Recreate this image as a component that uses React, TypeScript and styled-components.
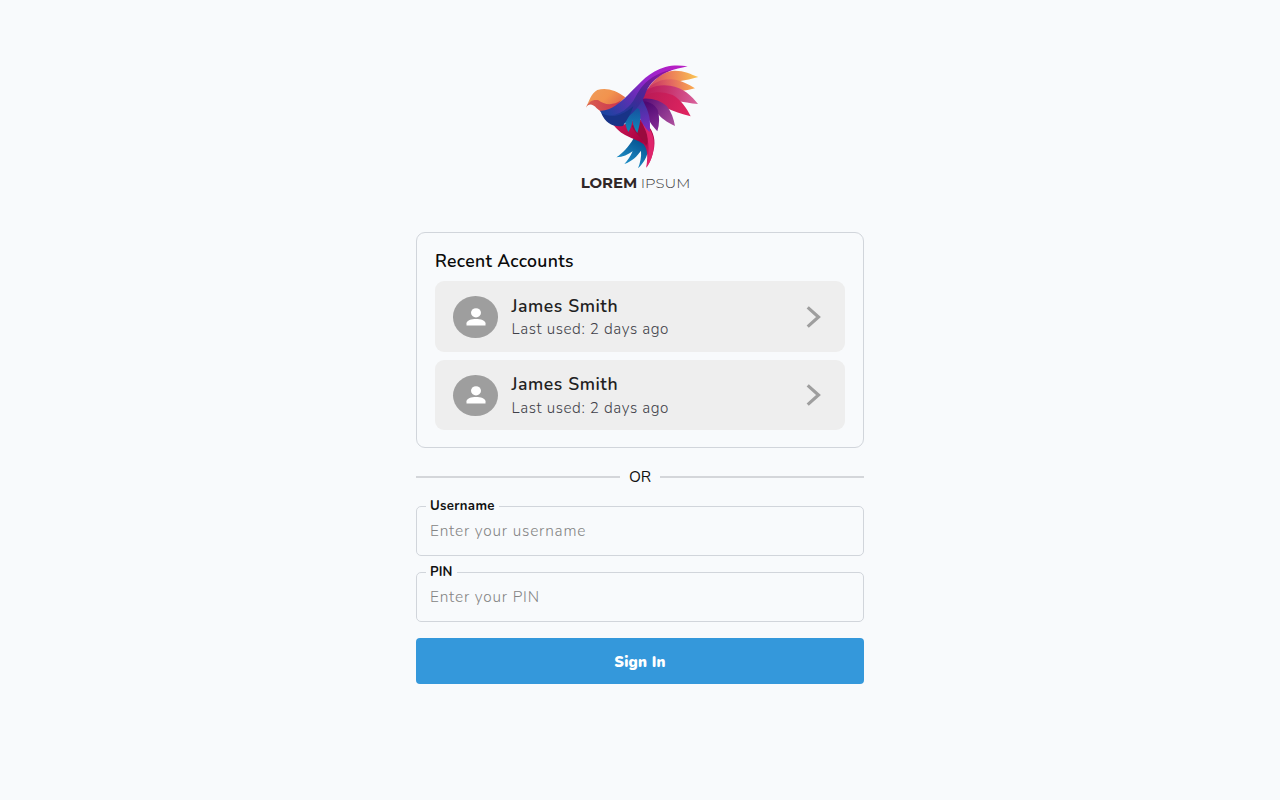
import React from "react";
import styled, { createGlobalStyle } from "styled-components";

const GlobalStyle = createGlobalStyle`
  * { box-sizing: border-box; }
  body {
    margin: 0;
    background: #f8fafc;
    font-family: Nunito, Lato, "Open Sans", sans-serif;
    color: #111;
  }
`;

const Page = styled.main`
  min-height: 800px;
  display: flex;
  flex-direction: column;
  align-items: center;
  padding-top: 55px;
`;

const Logo = styled.svg`
  display: block;
  width: 140px;
  height: 145px;
`;

const Content = styled.div`
  width: 448px;
  margin-top: 32px;
  display: flex;
  flex-direction: column;
`;

const Card = styled.section`
  height: 216px;
  border: 1px solid #d1d5db;
  border-radius: 9px;
  padding: 16px 18px 0;
`;

const CardTitle = styled.h2`
  margin: 0 0 8.2px;
  font-size: 17.6px;
  line-height: 24px;
  font-weight: 650;
  letter-spacing: 0.33px;
  color: #0a0a0a;
`;

const AccountList = styled.div`
  display: flex;
  flex-direction: column;
  gap: 7.7px;
`;

const Account = styled.button`
  display: flex;
  align-items: center;
  width: 100%;
  height: 70.7px;
  padding: 1px 18px 0;
  border: 0;
  border-radius: 9px;
  background: #eee;
  font-family: inherit;
  text-align: left;
`;

const Avatar = styled.span`
  display: flex;
  align-items: center;
  justify-content: center;
  width: 45px;
  height: 41.5px;
  border-radius: 50%;
  background: #9e9e9e;
`;

const Details = styled.span`
  display: flex;
  flex-direction: column;
  flex: 1;
  margin-left: 13.5px;
`;

const Name = styled.span`
  font-size: 17.6px;
  line-height: 24.7px;
  font-weight: 650;
  letter-spacing: 0.57px;
  color: #212121;
`;

const LastUsed = styled.span`
  font-size: 15.2px;
  line-height: 22px;
  font-weight: 300;
  letter-spacing: 0.6px;
  color: #3f3f48;
`;

const Chevron = styled.svg`
  width: 16px;
  height: 24px;
  margin-right: 5px;
`;

const Divider = styled.div`
  display: flex;
  align-items: center;
  gap: 9px;
  height: 20px;
  margin-top: 19px;
  font-size: 15.5px;
  line-height: 20px;

  &::before,
  &::after {
    content: "";
    flex: 1;
    height: 2px;
    background: #d4d6da;
  }
`;

const Field = styled.fieldset<{ $top: number }>`
  height: 58px;
  margin: ${(p) => p.$top}px 0 0;
  padding: 0 13px;
  min-width: 0;
  border: 1px solid #d1d5db;
  border-radius: 5px;
`;

const Legend = styled.legend<{ $spacing: number }>`
  margin-left: -4px;
  padding: 1px 4px 0;
  font-size: 13.2px;
  line-height: 15px;
  font-weight: 660;
  letter-spacing: ${(p) => p.$spacing}px;
  color: #111;
`;

const Input = styled.input`
  display: block;
  width: 100%;
  height: 33px;
  padding: 0;
  border: 0;
  outline: 0;
  background: transparent;
  font-family: inherit;
  font-size: 15.4px;
  font-weight: 300;
  letter-spacing: 0.82px;

  &::placeholder {
    color: #848484;
    opacity: 1;
  }
`;

const SignIn = styled.button`
  height: 46px;
  margin-top: 16.4px;
  padding-top: 2px;
  border: 0;
  border-radius: 4px;
  background: #3498db;
  color: #fff;
  font-family: inherit;
  font-size: 14.8px;
  font-weight: 900;
  letter-spacing: 0.22px;
`;

function BirdLogo() {
  return (
    <Logo viewBox="0 0 420 435" aria-label="Lorem Ipsum">
      <defs>
        <linearGradient id="head" x1="0" y1="0" x2="1" y2="0.5">
          <stop offset="0" stopColor="#ee9d5c" />
          <stop offset="0.6" stopColor="#f2934e" />
          <stop offset="1" stopColor="#e5704a" />
        </linearGradient>
        <linearGradient id="cheek" x1="0" y1="0" x2="1" y2="0">
          <stop offset="0" stopColor="#d9604f" />
          <stop offset="1" stopColor="#cc3350" />
        </linearGradient>
        <linearGradient id="wing" gradientUnits="userSpaceOnUse" x1="110" y1="180" x2="310" y2="35">
          <stop offset="0" stopColor="#1d43a0" />
          <stop offset="0.35" stopColor="#5c2fb2" />
          <stop offset="0.65" stopColor="#9823cd" />
          <stop offset="1" stopColor="#b51fc4" />
        </linearGradient>
        <linearGradient id="fold" gradientUnits="userSpaceOnUse" x1="180" y1="190" x2="270" y2="55">
          <stop offset="0" stopColor="#203999" />
          <stop offset="0.55" stopColor="#512397" />
          <stop offset="1" stopColor="#8b159e" />
        </linearGradient>
        <linearGradient id="gold" gradientUnits="userSpaceOnUse" x1="240" y1="80" x2="383" y2="66">
          <stop offset="0" stopColor="#d54b68" />
          <stop offset="0.5" stopColor="#ee8658" />
          <stop offset="1" stopColor="#fac553" />
        </linearGradient>
        <linearGradient id="amber" gradientUnits="userSpaceOnUse" x1="230" y1="110" x2="370" y2="95">
          <stop offset="0" stopColor="#c32863" />
          <stop offset="0.55" stopColor="#e36961" />
          <stop offset="1" stopColor="#faa84f" />
        </linearGradient>
        <linearGradient id="rose" gradientUnits="userSpaceOnUse" x1="220" y1="120" x2="382" y2="145">
          <stop offset="0" stopColor="#bc1857" />
          <stop offset="0.4" stopColor="#c62f69" />
          <stop offset="1" stopColor="#d8629d" />
        </linearGradient>
        <linearGradient id="crimson" gradientUnits="userSpaceOnUse" x1="215" y1="130" x2="350" y2="180">
          <stop offset="0" stopColor="#b81a55" />
          <stop offset="1" stopColor="#df2460" />
        </linearGradient>
        <linearGradient id="plum" gradientUnits="userSpaceOnUse" x1="220" y1="140" x2="312" y2="210">
          <stop offset="0" stopColor="#5a0e78" />
          <stop offset="1" stopColor="#ac4e9d" />
        </linearGradient>
        <linearGradient id="violet" gradientUnits="userSpaceOnUse" x1="220" y1="150" x2="260" y2="225">
          <stop offset="0" stopColor="#500973" />
          <stop offset="1" stopColor="#842b95" />
        </linearGradient>
        <linearGradient id="body" gradientUnits="userSpaceOnUse" x1="135" y1="210" x2="245" y2="330">
          <stop offset="0" stopColor="#c71754" />
          <stop offset="0.55" stopColor="#a90041" />
          <stop offset="1" stopColor="#df2d78" />
        </linearGradient>
        <linearGradient id="tail" gradientUnits="userSpaceOnUse" x1="205" y1="255" x2="165" y2="325">
          <stop offset="0" stopColor="#075493" />
          <stop offset="1" stopColor="#1d8ec6" />
        </linearGradient>
        <linearGradient id="underwing" gradientUnits="userSpaceOnUse" x1="190" y1="155" x2="190" y2="232">
          <stop offset="0" stopColor="#174e9e" />
          <stop offset="1" stopColor="#108ab9" />
        </linearGradient>
        <linearGradient id="indigo" gradientUnits="userSpaceOnUse" x1="205" y1="140" x2="235" y2="230">
          <stop offset="0" stopColor="#37359f" />
          <stop offset="1" stopColor="#812ac2" />
        </linearGradient>
      </defs>
      <path fill="url(#gold)" d="M225 115C245 75 280 48 312 47C340 46 362 57 385 66C366 72 345 75 332 78L285 90Z" />
      <path fill="url(#amber)" d="M215 128C235 88 270 71 305 73C335 76 355 88 375 100C358 105 345 106 335 108L270 112Z" />
      <path fill="url(#rose)" d="M210 130C225 98 265 86 300 92C340 98 365 122 384 147C362 145 340 141 320 138L260 130Z" />
      <path fill="url(#crimson)" d="M205 134C235 108 275 106 308 120C335 136 350 160 362 184C335 178 310 168 288 159L240 150Z" />
      <path fill="url(#plum)" d="M208 132C240 126 272 136 290 153C304 170 311 190 315 213C290 202 272 188 262 174L222 164Z" />
      <path fill="url(#violet)" d="M207 138C230 136 251 144 263 164C269 184 269 207 262 229C245 210 235 198 226 165Z" />
      <path fill="url(#tail)" d="M191 250C176 276 158 295 139 307C159 306 174 299 188 289C181 305 173 316 163 327C187 318 201 304 213 287C215 306 210 325 204 340C220 325 233 304 234 284C235 262 220 240 191 246Z" />
      <path fill="url(#body)" d="M130 209C154 216 178 205 202 185L238 216C256 242 257 267 248 298C244 314 237 326 229 338C232 315 236 286 221 268C199 249 158 248 130 209Z" />
      <path fill="#df246b" d="M218 198C250 226 257 257 248 296C243 315 237 328 229 338C238 300 241 258 222 226Z" />
      <path fill="#9a0a3f" d="M185 212C192 232 214 246 229 272C237 252 232 228 212 200Z" />
      <path fill="url(#indigo)" d="M185 150L214 125C224 153 246 174 239 231C224 218 216 204 209 188L184 180Z" />
      <path fill="url(#underwing)" d="M161 174C179 160 198 155 208 162C215 187 209 212 202 234C193 222 188 208 187 195C186 211 182 222 175 231C168 218 165 207 164 190Z" />
      <path fill="url(#head)" d="M48 158C58 137 63 115 82 105C105 97 137 103 166 127L143 150C126 158 100 157 83 138L63 141C58 143 53 149 48 158Z" />
      <path fill="url(#cheek)" d="M48 158C55 139 68 133 84 135C103 150 129 153 153 136C139 158 117 172 94 171L80 160C67 145 55 146 48 158Z" />
      <path fill="url(#wing)" d="M90 167C122 169 148 144 174 120C212 82 238 49 286 36C309 30 331 31 353 34C312 43 279 52 252 70C224 88 220 125 198 149C172 183 142 194 109 192C100 186 95 176 90 167Z" />
      <path fill="url(#fold)" d="M102 183C151 184 180 158 196 127C214 92 240 58 305 44C262 63 240 83 228 111C216 147 190 177 158 197C134 204 118 199 108 194Z" />
      <path fill="#183387" d="M94 175C125 191 155 184 190 154C182 176 170 198 159 213C130 217 106 205 94 175Z" />
      <text x="32" y="399" fill="#302728" fontFamily="Montserrat, Inter, sans-serif" fontSize="42" fontWeight="750" textLength="170" lengthAdjust="spacingAndGlyphs">LOREM</text>
      <text x="212" y="399" fill="#3c3c3c" fontFamily="Montserrat, Inter, sans-serif" fontSize="42" fontWeight="300" textLength="149" lengthAdjust="spacingAndGlyphs">IPSUM</text>
    </Logo>
  );
}

function RecentAccount() {
  return (
    <Account>
      <Avatar>
        <svg width="20" height="18" viewBox="0 0 20 18" fill="#fff">
          <ellipse cx="10" cy="4.8" rx="5" ry="4.6" />
          <path d="M.5 17.5v-2.2c0-3 5-4.4 9.5-4.4s9.5 1.4 9.5 4.4v2.2Z" />
        </svg>
      </Avatar>
      <Details>
        <Name>James Smith</Name>
        <LastUsed>Last used: 2 days ago</LastUsed>
      </Details>
      <Chevron viewBox="0 0 16 24" fill="none" stroke="#9e9e9e" strokeWidth="3.2">
        <path d="M1.7 2.4 12.5 12 1.7 21.6" />
      </Chevron>
    </Account>
  );
}

export default function App() {
  return (
    <Page>
      <GlobalStyle />
      <BirdLogo />
      <Content>
        <Card>
          <CardTitle>Recent Accounts</CardTitle>
          <AccountList>
            <RecentAccount />
            <RecentAccount />
          </AccountList>
        </Card>
        <Divider>OR</Divider>
        <Field $top={11}>
          <Legend $spacing={0.33}>Username</Legend>
          <Input placeholder="Enter your username" />
        </Field>
        <Field $top={8}>
          <Legend $spacing={0.15}>PIN</Legend>
          <Input type="password" placeholder="Enter your PIN" />
        </Field>
        <SignIn>Sign In</SignIn>
      </Content>
    </Page>
  );
}
